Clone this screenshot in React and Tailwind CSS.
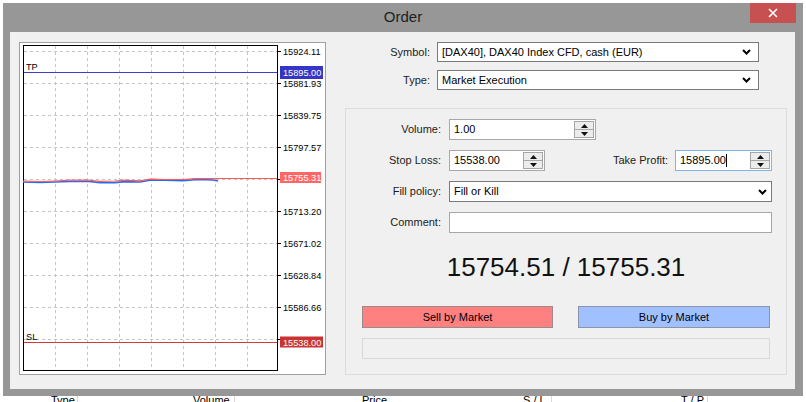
import React from "react";

const font = "font-['Liberation_Sans',Arial,sans-serif]";

// axis levels on the right side of the chart
const levels = [
  ["15924.11", 51.5],
  ["15881.93", 83.5],
  ["15839.75", 115.5],
  ["15797.57", 147.5],
  ["15755.39", 179.5],
  ["15713.20", 211.5],
  ["15671.02", 243.5],
  ["15628.84", 275.5],
  ["15586.66", 307.5],
  ["15544.48", 339.5],
];

const vlines = [55.5, 87.5, 119.5, 151.5, 183.5, 215.5, 247.5];

const bid =
  "23,182 40,182.5 55,182 70,181.5 87,181.2 100,182.6 115,182.6 125,181.6 140,182 150,180.2 165,180.2 183,180.6 195,179.8 205,179.8 213,180 218,181";
const ask =
  "23,181 40,181.5 55,181 70,180.2 87,180 100,181.4 115,181 125,180.2 140,180.8 150,179.2 165,179.5 183,179.5 195,178.6 205,178.6 218,178.5 277,178.5";

function Chart() {
  return (
    <div className="w-[307px] h-[333px] shrink-0 border border-[#a0a0a0] bg-white">
      <svg width="305" height="331" viewBox="20 43 305 331" fontFamily="Liberation Sans, Arial, sans-serif">
        {vlines.map((x) => (
          <line key={x} x1={x} y1="46" x2={x} y2="370" stroke="#c4c4c4" strokeDasharray="3 3" />
        ))}
        {levels.map(([label, y]) => (
          <g key={label}>
            <line x1="24" y1={y} x2="277" y2={y} stroke="#c4c4c4" strokeDasharray="3 3" />
            <line x1="277" y1={y} x2="281" y2={y} stroke="#000" />
            <text x="283" y={y + 3} fontSize="9.2" fill="#000">
              {label}
            </text>
          </g>
        ))}
        <rect x="23.5" y="45.5" width="254" height="325" fill="none" stroke="#000" />

        {/* take profit */}
        <line x1="24" y1="72.5" x2="277" y2="72.5" stroke="#3c3cc8" />
        <text x="26" y="70" fontSize="9.2" fill="#000">TP</text>
        <rect x="280" y="66" width="43" height="13" fill="#3535c6" />
        <text x="283" y="76" fontSize="9.2" fill="#fff">15895.00</text>

        {/* price series */}
        <polyline points={bid} fill="none" stroke="#2a6cf0" strokeWidth="1.6" />
        <polyline points={ask} fill="none" stroke="#ff5a5a" strokeWidth="1.2" />
        <rect x="280" y="172" width="41" height="11" fill="#ff6666" />
        <text x="283" y="181" fontSize="9.2" fill="#fff">15755.31</text>

        {/* stop loss */}
        <line x1="24" y1="342.5" x2="277" y2="342.5" stroke="#d23a3a" />
        <text x="26" y="340" fontSize="9.2" fill="#000">SL</text>
        <rect x="280" y="336.5" width="43" height="11" fill="#c83434" />
        <text x="283" y="345.5" fontSize="9.2" fill="#fff">15538.00</text>
      </svg>
    </div>
  );
}

function Chevron() {
  return (
    <svg width="9" height="6" viewBox="0 0 9 6" className="shrink-0">
      <polyline points="1,1 4.5,4.5 8,1" fill="none" stroke="#000" strokeWidth="2" />
    </svg>
  );
}

function Select({ value, w }) {
  return (
    <div className={`${w} h-[20px] flex items-center justify-between border border-[#7a7a7a] bg-white pl-[4px] pr-[7px]`}>
      <span className="whitespace-nowrap">{value}</span>
      <Chevron />
    </div>
  );
}

function Spinner() {
  return (
    <div className="w-[20px] h-[17px] flex flex-col border border-[#a6a6a6] bg-[#ececec]">
      <div className="flex-1 flex items-center justify-center border-b border-[#a6a6a6]">
        <svg width="7" height="4" viewBox="0 0 7 4">
          <path d="M3.5 0L7 4H0z" fill="#111" />
        </svg>
      </div>
      <div className="flex-1 flex items-center justify-center">
        <svg width="7" height="4" viewBox="0 0 7 4">
          <path d="M0 0H7L3.5 4z" fill="#111" />
        </svg>
      </div>
    </div>
  );
}

function NumInput({ value, w, focused, caret }) {
  return (
    <div
      className={`${w} h-[21px] flex items-center justify-between bg-white pl-[4px] pr-[1px] border ${
        focused ? "border-[#7eb4ea]" : "border-[#a8a8a8]"
      }`}
    >
      <span className="flex items-center">
        {value}
        {caret && <span className="w-px h-[13px] bg-black" />}
      </span>
      <Spinner />
    </div>
  );
}

function Label({ w, children }) {
  return <div className={`${w} shrink-0 text-right text-[#1c1c1c]`}>{children}</div>;
}

export default function App() {
  return (
    <div className={`relative w-[806px] h-[402px] overflow-hidden bg-white ${font} text-[11px] text-black`}>
      {/* terminal table header behind the dialog */}
      <div className="flex pt-[393px] text-[11px] leading-[14px]">
        <div className="w-[78px] pl-[51px] border-r border-[#d8d8d8]">Type</div>
        <div className="w-[157px] pl-[115px] border-r border-[#d8d8d8]">Volume</div>
        <div className="w-[288px] pl-[127px]">Price</div>
        <div className="w-[29px] border-r border-[#d8d8d8]">S / L</div>
        <div className="w-[156px] pl-[129px] border-r border-[#d8d8d8]">T / P</div>
      </div>

      {/* dialog window */}
      <div className="absolute left-[3px] top-[3px] w-[800px] h-[393px] bg-[#979797] flex flex-col">
        <div className="relative h-[29px] flex items-center justify-center">
          <span className="text-[15px] text-[#1e1e1e]">Order</span>
          <div className="absolute right-[7px] top-0 w-[46px] h-[20px] bg-[#c75050] flex items-center justify-center">
            <svg width="10" height="10" viewBox="0 0 10 10">
              <path d="M1 1L9 9M9 1L1 9" stroke="#fff" strokeWidth="1.6" />
            </svg>
          </div>
        </div>

        <div className="ml-[7px] w-[785px] h-[357px] bg-[#f0f0f0] flex pl-[9px] pt-[10px]">
          <Chart />

          <div className="ml-[19px] w-[442px] flex flex-col">
            <div className="flex items-center h-[20px]">
              <Label w="w-[85px]">Symbol:</Label>
              <div className="ml-[7px]">
                <Select w="w-[322px]" value="[DAX40], DAX40 Index CFD, cash (EUR)" />
              </div>
            </div>
            <div className="flex items-center h-[20px] mt-[8px]">
              <Label w="w-[85px]">Type:</Label>
              <div className="ml-[7px]">
                <Select w="w-[322px]" value="Market Execution" />
              </div>
            </div>

            <div className="mt-[18px] h-[267px] border border-[#dcdcdc] flex flex-col pt-[10px]">
              <div className="flex items-center">
                <Label w="w-[95px]">Volume:</Label>
                <div className="ml-[8px]">
                  <NumInput w="w-[147px]" value="1.00" />
                </div>
              </div>

              <div className="flex items-center mt-[10px]">
                <Label w="w-[95px]">Stop Loss:</Label>
                <div className="ml-[8px]">
                  <NumInput w="w-[96px]" value="15538.00" />
                </div>
                <Label w="w-[123px]">Take Profit:</Label>
                <div className="ml-[7px]">
                  <NumInput w="w-[97px]" value="15895.00" focused caret />
                </div>
              </div>

              <div className="flex items-center mt-[10px]">
                <Label w="w-[95px]">Fill policy:</Label>
                <div className="ml-[8px]">
                  <div className="w-[323px] h-[21px] flex items-center justify-between border border-[#7a7a7a] bg-white pl-[4px] pr-[4px]">
                    <span>Fill or Kill</span>
                    <Chevron />
                  </div>
                </div>
              </div>

              <div className="flex items-center mt-[10px]">
                <Label w="w-[95px]">Comment:</Label>
                <div className="ml-[8px] w-[323px] h-[21px] border border-[#a8a8a8] bg-white" />
              </div>

              <div className="mt-[20px] text-center text-[26px] leading-[29px] text-[#111]">
                15754.51 / 15755.31
              </div>

              <div className="mt-[24px] px-[16px] flex gap-[25px]">
                <div className="w-[191px] h-[22px] flex items-center justify-center bg-[#ff8080] border border-[#9a8a8a]">
                  Sell by Market
                </div>
                <div className="w-[192px] h-[22px] flex items-center justify-center bg-[#a0c0ff] border border-[#8a94a8]">
                  Buy by Market
                </div>
              </div>

              <div className="mt-[10px] mx-[16px] w-[408px] h-[21px] border border-[#d8d8d8]" />
            </div>
          </div>
        </div>
      </div>
    </div>
  );
}
